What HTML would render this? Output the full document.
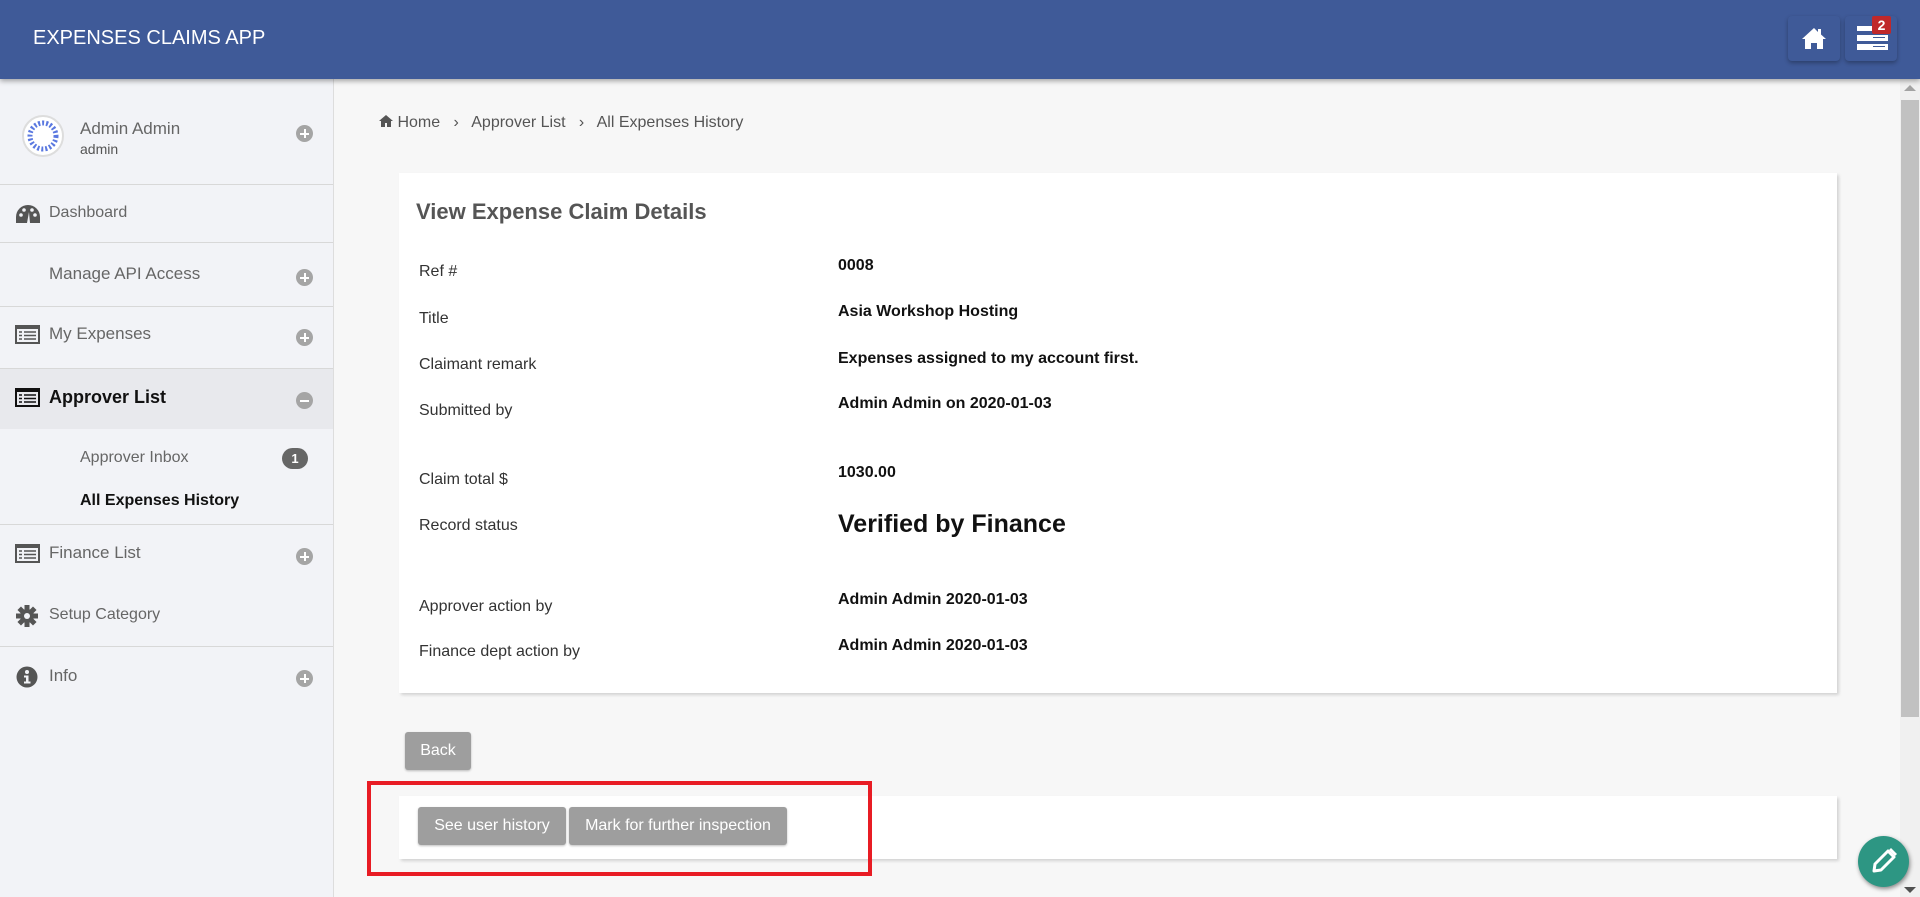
<!DOCTYPE html>
<html><head><meta charset="utf-8"><style>
*{box-sizing:border-box;margin:0;padding:0}
body{width:1920px;height:897px;overflow:hidden;background:#f7f7f7;font-family:"Liberation Sans",sans-serif;position:relative}
.hdr{position:absolute;left:0;top:0;width:1920px;height:79px;background:#3f5a98;box-shadow:0 2px 5px rgba(0,0,0,.35);z-index:5}
.hdr .t{position:absolute;left:33px;top:27px;color:#fff;font-size:20px}
.hb{position:absolute;top:16px;width:52px;height:45px;background:#3f5a98;border-radius:4px;box-shadow:0 2px 4px rgba(0,0,0,.3)}
.side{position:absolute;left:0;top:79px;width:334px;height:818px;background:#f2f3f7;border-right:1px solid #ddd}
.it{position:absolute;left:0;width:333px;color:#666;font-size:17px}
.sep{position:absolute;left:0;width:333px;height:1px;background:#d8d8d8}
.plus{position:absolute;left:296px;width:17px;height:17px;border-radius:50%;background:#a5a5a5}
.plus:before{content:"";position:absolute;left:4px;top:7.5px;width:9px;height:2px;background:#fff}
.plus.p:after{content:"";position:absolute;left:7.5px;top:4px;width:2px;height:9px;background:#fff}
.ico{position:absolute;left:15px}
.card{position:absolute;left:399px;width:1438px;background:#fff;box-shadow:2px 2px 3px rgba(0,0,0,.15)}
.lb{position:absolute;left:419px;font-size:16px;color:#333}
.vl{position:absolute;left:838px;font-size:16px;font-weight:bold;color:#111}
.btn{position:absolute;background:#9e9e9e;color:#fff;font-size:16px;border-radius:3px;box-shadow:0 1px 2px rgba(0,0,0,.25);text-align:center}
</style></head><body>
<div class="hdr"><div class="t">EXPENSES CLAIMS APP</div>
<div class="hb" style="left:1788px"><svg width="52" height="45" viewBox="0 0 52 45"><path d="M26 12 L14 23 L17 23 L17 33 L23 33 L23 27 L29 27 L29 33 L35 33 L35 23 L38 23 L33 18.5 L33 13 L30 13 L30 16 Z" fill="#fff"/></svg></div>
<div class="hb" style="left:1845px"><div style="position:absolute;left:12px;top:10px;width:31px;height:5px;background:#fff"></div><div style="position:absolute;left:12px;top:19px;width:31px;height:6px;background:#fff"></div><div style="position:absolute;left:12px;top:28px;width:31px;height:6px;background:#fff"></div><div style="position:absolute;left:28px;top:21px;width:12px;height:1px;background:#3f5a98"></div><div style="position:absolute;left:28px;top:30px;width:12px;height:1px;background:#3f5a98"></div><div style="position:absolute;left:27px;top:0;width:19px;height:18px;background:#c0282a;border-radius:2px;color:#fff;font-weight:bold;font-size:14px;text-align:center;line-height:18px">2</div></div>
</div>
<div class="side">
<div style="position:absolute;left:22px;top:36px;width:42px;height:42px;border-radius:50%;background:#fff;border:2px solid #ddd"><svg width="38" height="38" viewBox="0 0 38 38" style="position:absolute;left:0;top:0"><circle cx="19" cy="19" r="13" fill="none" stroke="#5a78e0" stroke-width="5" stroke-dasharray="2 2"/></svg></div>
<div class="it" style="left:80px;top:40px;width:200px">Admin Admin</div>
<div class="it" style="left:80px;top:62px;width:200px;font-size:14px;color:#555">admin</div>
<div class="plus p" style="top:46px"></div>
<div class="sep" style="top:105px"></div>
<svg class="ico" style="top:125px" width="26" height="20" viewBox="0 0 26 20"><path d="M13 1A12 12 0 0 0 1 13v6h24v-6A12 12 0 0 0 13 1z" fill="#555"/><circle cx="6" cy="11" r="1.8" fill="#f2f3f7"/><circle cx="9" cy="6" r="1.8" fill="#f2f3f7"/><circle cx="17" cy="6" r="1.8" fill="#f2f3f7"/><circle cx="20" cy="11" r="1.8" fill="#f2f3f7"/><path d="M12 19 L14 8 L15 19z" fill="#f2f3f7"/></svg>
<div class="it" style="left:49px;top:125px;font-size:16px">Dashboard</div>
<div class="sep" style="top:163px"></div>
<div class="it" style="left:49px;top:185px">Manage API Access</div><div class="plus p" style="top:190px"></div>
<div class="sep" style="top:227px"></div>
<svg class="ico" style="top:246px" width="25" height="19" viewBox="0 0 25 19"><rect x="1" y="1" width="23" height="17" fill="none" stroke="#555" stroke-width="2"/><rect x="1" y="1" width="23" height="3" fill="#555"/><path d="M4 7h3M9 7h12M4 10.5h3M9 10.5h12M4 14h3M9 14h12" stroke="#555" stroke-width="1.6"/></svg>
<div class="it" style="left:49px;top:245px">My Expenses</div><div class="plus p" style="top:250px"></div>
<div class="sep" style="top:289px"></div>
<div style="position:absolute;left:0;top:290px;width:333px;height:60px;background:#e8e9ed"></div>
<svg class="ico" style="top:309px" width="25" height="19" viewBox="0 0 25 19"><rect x="1" y="1" width="23" height="17" fill="none" stroke="#111" stroke-width="2"/><rect x="1" y="1" width="23" height="3" fill="#111"/><path d="M4 7h3M9 7h12M4 10.5h3M9 10.5h12M4 14h3M9 14h12" stroke="#111" stroke-width="1.6"/></svg>
<div class="it" style="left:49px;top:308px;color:#111;font-weight:bold;font-size:18px">Approver List</div><div class="plus" style="top:313px"></div>
<div class="it" style="left:80px;top:370px;font-size:16px">Approver Inbox</div>
<div style="position:absolute;left:282px;top:369px;width:26px;height:21px;border-radius:11px;background:#666;color:#fff;font-weight:bold;font-size:13px;text-align:center;line-height:21px">1</div>
<div class="it" style="left:80px;top:413px;font-size:16px;color:#111;font-weight:bold">All Expenses History</div>
<div class="sep" style="top:445px"></div>
<svg class="ico" style="top:465px" width="25" height="19" viewBox="0 0 25 19"><rect x="1" y="1" width="23" height="17" fill="none" stroke="#555" stroke-width="2"/><rect x="1" y="1" width="23" height="3" fill="#555"/><path d="M4 7h3M9 7h12M4 10.5h3M9 10.5h12M4 14h3M9 14h12" stroke="#555" stroke-width="1.6"/></svg>
<div class="it" style="left:49px;top:464px">Finance List</div><div class="plus p" style="top:469px"></div>
<svg class="ico" style="top:526px;left:16px" width="22" height="22" viewBox="0 0 22 22"><g fill="#555" transform="translate(11 11)"><circle r="7"/><rect x="-2.5" y="-11" width="5" height="22"/><rect x="-2.5" y="-11" width="5" height="22" transform="rotate(45)"/><rect x="-2.5" y="-11" width="5" height="22" transform="rotate(90)"/><rect x="-2.5" y="-11" width="5" height="22" transform="rotate(135)"/><circle r="3" fill="#f2f3f7"/></g></svg>
<div class="it" style="left:49px;top:527px;font-size:16px">Setup Category</div>
<div class="sep" style="top:567px"></div>
<svg class="ico" style="top:587px;left:16px" width="22" height="22" viewBox="0 0 22 22"><circle cx="11" cy="11" r="10.5" fill="#555"/><circle cx="11" cy="6" r="2" fill="#f2f3f7"/><path d="M8 9.5h4.5v6h2v2h-6.5v-2h2v-4h-2z" fill="#f2f3f7"/></svg>
<div class="it" style="left:49px;top:587px">Info</div><div class="plus p" style="top:591px"></div>
</div>
<div style="position:absolute;left:379px;top:114px;font-size:16px;color:#555;white-space:pre"><svg width="14" height="12" viewBox="0 0 14 12" style="vertical-align:0"><path d="M7 0L0 6h2v6h4V8h2v4h4V6h2z" fill="#555"/></svg> Home   ›   Approver List   ›   All Expenses History</div>
<div class="card" style="top:173px;height:520px"></div>
<div style="position:absolute;left:416px;top:199px;font-size:22px;font-weight:bold;color:#555">View Expense Claim Details</div>
<div class="lb" style="top:263px">Ref #</div><div class="vl" style="top:257px">0008</div>
<div class="lb" style="top:310px">Title</div><div class="vl" style="top:303px">Asia Workshop Hosting</div>
<div class="lb" style="top:356px">Claimant remark</div><div class="vl" style="top:350px">Expenses assigned to my account first.</div>
<div class="lb" style="top:402px">Submitted by</div><div class="vl" style="top:395px">Admin Admin on 2020-01-03</div>
<div class="lb" style="top:471px">Claim total $</div><div class="vl" style="top:464px">1030.00</div>
<div class="lb" style="top:517px">Record status</div><div class="vl" style="top:510px;font-size:25px">Verified by Finance</div>
<div class="lb" style="top:598px">Approver action by</div><div class="vl" style="top:591px">Admin Admin 2020-01-03</div>
<div class="lb" style="top:643px">Finance dept action by</div><div class="vl" style="top:637px">Admin Admin 2020-01-03</div>
<div class="btn" style="left:405px;top:732px;width:66px;height:38px;line-height:38px">Back</div>
<div class="card" style="top:796px;height:63px"></div>
<div class="btn" style="left:418px;top:807px;width:148px;height:38px;line-height:38px">See user history</div>
<div class="btn" style="left:569px;top:807px;width:218px;height:38px;line-height:38px">Mark for further inspection</div>
<div style="position:absolute;left:367px;top:781px;width:505px;height:95px;border:4px solid #e81c24"></div>
<div style="position:absolute;left:1900px;top:79px;width:20px;height:818px;background:#f0f0f0"></div>
<div style="position:absolute;left:1901px;top:100px;width:18px;height:617px;background:#c1c1c1"></div>
<div style="position:absolute;left:1904px;top:85px;border:6px solid transparent;border-bottom:6px solid #a3a3a3;border-top:0"></div>
<div style="position:absolute;left:1904px;top:887px;border:6px solid transparent;border-top:6px solid #505050;border-bottom:0"></div>
<div style="position:absolute;left:1858px;top:836px;width:51px;height:51px;border-radius:50%;background:#2d9683;box-shadow:1px 2px 4px rgba(0,0,0,.45)"><svg width="51" height="51" viewBox="0 0 51 51"><path d="M30 15l6 6-13 13-7 1 1-7z" fill="none" stroke="#fff" stroke-width="3" stroke-linejoin="round"/><path d="M31 14l2-2 6 6-2 2z" fill="#fff"/></svg></div>
</body></html>
